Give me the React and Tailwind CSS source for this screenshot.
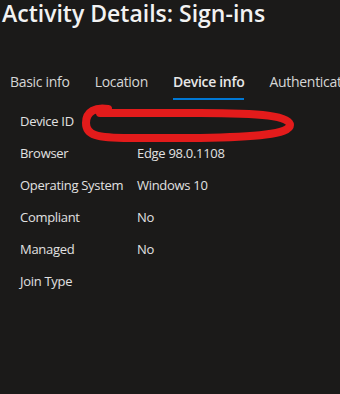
import React from "react";

const rows = [
  { label: "Device ID", value: "" },
  { label: "Browser", value: "Edge 98.0.1108" },
  { label: "Operating System", value: "Windows 10" },
  { label: "Compliant", value: "No" },
  { label: "Managed", value: "No" },
  { label: "Join Type", value: "" },
];

const tabs = ["Basic info", "Location", "Device info", "Authentication Details"];

export default function App() {
  return (
    <div
      className="relative w-[340px] h-[394px] overflow-hidden bg-[#1b1a19] text-[#e1e1e1]"
      style={{ fontFamily: '"Open Sans", "Noto Sans", sans-serif' }}
    >
      {/* Titulo */}
      <h1 className="pl-[2px] text-[23px] leading-[26px] font-semibold text-[#f2f2f2] whitespace-nowrap">
        Activity Details: Sign-ins
      </h1>

      {/* Pestañas */}
      <div className="flex gap-[25px] pl-[10px] mt-[46px] text-[14px] whitespace-nowrap tracking-[-0.3px]">
        {tabs.map((t) => (
          <div
            key={t}
            className={`flex flex-col h-[28px] justify-between ${
              t === "Device info" ? "font-semibold text-[#e8e8e8]" : "text-[#d6d6d6]"
            }`}
          >
            <span className="leading-[20px]">{t}</span>
            {t === "Device info" && <span className="h-[2px] bg-[#0078d4]" />}
          </div>
        ))}
      </div>

      {/* Filas */}
      <div className="flex flex-col pl-[20px] mt-[6px] text-[13px] tracking-[-0.3px]">
        {rows.map((r) => (
          <div key={r.label} className="flex h-[32px] items-center">
            <span className="w-[117px]">{r.label}</span>
            <span>{r.value}</span>
          </div>
        ))}
      </div>

      {/* Garabato rojo */}
      <svg className="absolute left-0 top-0" width="340" height="394">
        <path
          d="M108 109 C96 107 86 111 86 123 C86 135 96 138 130 138 L200 138 C255 137 290 134 290 125 C290 116 262 113 200 113 L100 113"
          fill="none"
          stroke="#e31b1b"
          strokeWidth="8"
          strokeLinecap="round"
          strokeLinejoin="round"
        />
      </svg>
    </div>
  );
}
